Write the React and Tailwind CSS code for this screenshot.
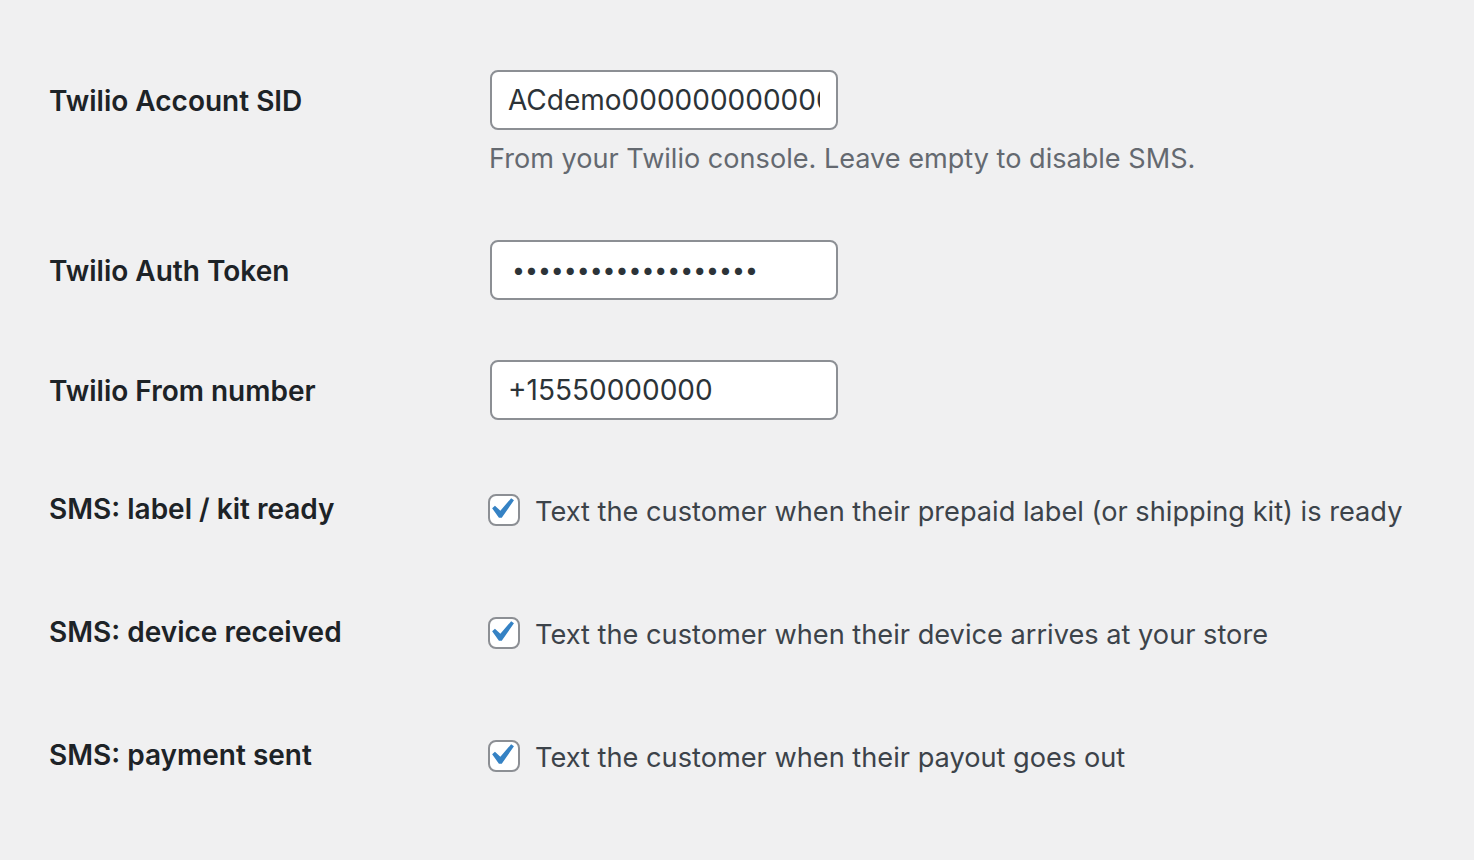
import React from 'react';

const Check = () => (
  <span className="relative block w-[32px] h-[32px] shrink-0 rounded-[8px] border-2 border-[#8c8f94] bg-white">
    <svg className="absolute -top-[8px] -left-[10px] w-[42px] h-[42px]" viewBox="0 0 20 20">
      <path d="M14.83 4.89l1.34.94-5.81 8.38H9.02L5.78 9.67l1.34-1.25 2.57 2.4z" fill="#3582c4" />
    </svg>
  </span>
);

const TextRow = ({ label, children }) => (
  <div className="flex">
    <div className="w-[441px] shrink-0 pt-[43px] text-[28px] leading-[36px] font-semibold text-[#1d2327]">{label}</div>
    <div className="py-[30px]">{children}</div>
  </div>
);

const CheckRow = ({ label, text }) => (
  <div className="flex h-[123px]">
    <div className="w-[441px] shrink-0 pt-[41px] text-[28px] leading-[36px] font-semibold text-[#1d2327]">{label}</div>
    <label className="flex items-center gap-[15px] pt-[43px] h-fit -ml-[2px] text-[27.2px] leading-[36px] text-[#3c434a]">
      <span className="-mt-[4px]"><Check /></span>
      <span className="mt-[1px]">{text}</span>
    </label>
  </div>
);

const inputCls =
  'block w-[348px] h-[60px] rounded-[8px] border-2 border-[#8c8f94] bg-white px-[16px] text-[28px] text-[#2c3338] outline-none';

export default function App() {
  return (
    <div className="min-h-screen bg-[#f0f0f1] pl-[49px] pt-[40px]" style={{ fontFamily: 'Inter, "Noto Sans", sans-serif' }}>
      <TextRow label="Twilio Account SID">
        <input className={inputCls} type="text" readOnly value="ACdemo00000000000000000000000000" />
        <p className="mt-[8px] -ml-[1px] text-[27.1px] leading-[42px] text-[#646970]">From your Twilio console. Leave empty to disable SMS.</p>
      </TextRow>
      <TextRow label="Twilio Auth Token">
        <input className={inputCls + ' !text-[23px] pl-[20px]'} type="password" readOnly value="xxxxxxxxxxxxxxxxxxx" />
      </TextRow>
      <TextRow label="Twilio From number">
        <input className={inputCls} type="text" readOnly value="+15550000000" />
      </TextRow>
      <CheckRow label="SMS: label / kit ready" text="Text the customer when their prepaid label (or shipping kit) is ready" />
      <CheckRow label="SMS: device received" text="Text the customer when their device arrives at your store" />
      <CheckRow label="SMS: payment sent" text="Text the customer when their payout goes out" />
    </div>
  );
}
